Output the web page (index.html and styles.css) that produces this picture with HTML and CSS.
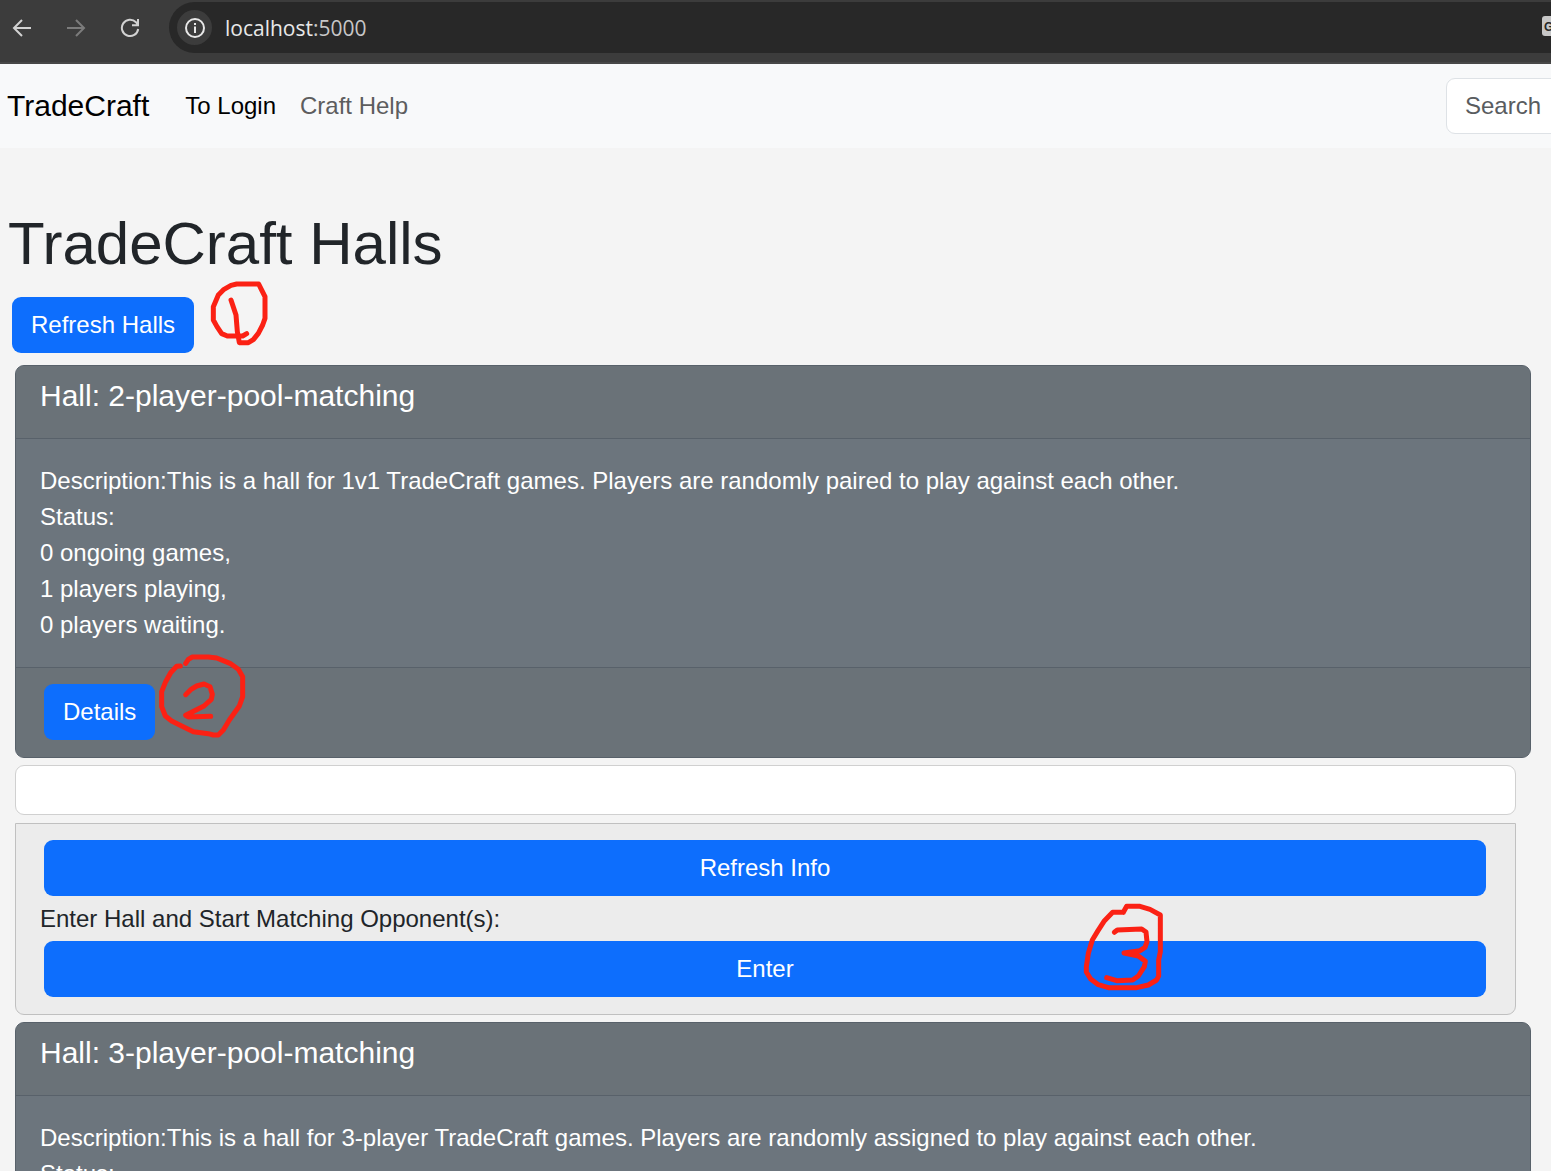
FILE: index.html
```html
<!DOCTYPE html>
<html lang="en">
<head>
<meta charset="utf-8">
<title>TradeCraft Halls</title>
<link rel="stylesheet" href="styles.css">
</head>
<body>
<div class="window">
  <header class="browser">
    <button class="tool" type="button" aria-label="Back"><svg width="20" height="20" viewBox="0 0 20 20"><path d="M19 10H2M10 2L2 10L10 18"/></svg></button>
    <button class="tool tool-off" type="button" aria-label="Forward"><svg width="20" height="20" viewBox="0 0 20 20"><path d="M1 10H18M10 2L18 10L10 18"/></svg></button>
    <button class="tool" type="button" aria-label="Reload"><svg width="20" height="20" viewBox="0 0 20 20"><path d="M18.2 11A8.2 8.2 0 1 1 16 4.2L17.6 6.5M18 1V7.3H12M18 3V7.3H14"/></svg></button>
    <div class="address">
      <button class="site-info" type="button" aria-label="Site information"><svg width="20" height="20" viewBox="0 0 20 20"><circle cx="10" cy="10" r="9"/><path d="M10 8.5V15M10 5V7"/></svg></button>
      <span class="url">localhost<span class="port">:5000</span></span>
      <span class="translate">G</span>
    </div>
  </header>

  <nav class="navbar">
    <a class="brand" href="#">TradeCraft</a>
    <a class="nav-link active" href="#">To Login</a>
    <a class="nav-link" href="#">Craft Help</a>
    <form class="search"><input type="search" placeholder="Search" aria-label="Search"></form>
  </nav>

  <main class="page">
    <h1>TradeCraft Halls</h1>
    <div class="actions">
      <button class="btn" type="button">Refresh Halls</button>
      <svg class="mark mark-one" width="60" height="66" viewBox="630 243 180 198"><path d="M740 401L728 408H682L665 401L651 380L640 360V320L655 285L672 268L693 256L710 252H776L784 268L795 290V355L788 375L775 400L760 419L745 428H718L712 395L708 345L693 300"/></svg>
    </div>

    <section class="card">
      <header class="card-header"><h4>Hall: 2-player-pool-matching</h4></header>
      <div class="card-body">
        <div>Description:This is a hall for 1v1 TradeCraft games. Players are randomly paired to play against each other.</div>
        <div>Status:</div>
        <div>0 ongoing games,</div>
        <div>1 players playing,</div>
        <div>0 players waiting.</div>
      </div>
      <footer class="card-footer">
        <button class="btn" type="button">Details</button>
        <svg class="mark mark-two" width="90" height="87" viewBox="474 36 270 261"><path d="M541 78L530 79L512 98L497 125L485 155V200L496 228L515 243L545 258L580 275L625 281L640 285H655L670 270L688 240L718 198L728 170V110L715 88L690 70L650 54L625 51H577L565 58L557 70M557 164L572 149L590 138L612 132L630 140L637 163L634 178L612 198L557 226L565 231L632 229"/></svg>
      </footer>
    </section>

    <input class="field" type="text" aria-label="Hall message">

    <section class="panel">
      <button class="btn" type="button">Refresh Info</button>
      <p>Enter Hall and Start Matching Opponent(s):</p>
      <button class="btn" type="button">Enter</button>
      <svg class="mark mark-three" width="86" height="94" viewBox="66 30 258 282"><path d="M190 67H158L132 94L114 122L97 150L85 190L79 230V246L92 267L115 284L145 293H230L265 285L290 270L296 258V210L301 185V75L270 58L240 49H200L190 67M163 127L172 120L245 117L258 126L261 155L255 172L240 182L192 189L235 198L256 214L253 230L235 258L218 270L170 272L140 263"/></svg>
    </section>

    <section class="card">
      <header class="card-header"><h4>Hall: 3-player-pool-matching</h4></header>
      <div class="card-body">
        <div>Description:This is a hall for 3-player TradeCraft games. Players are randomly assigned to play against each other.</div>
        <div>Status:</div>
      </div>
    </section>
  </main>
</div>
</body>
</html>
```
FILE: styles.css
```css
* { box-sizing: border-box; }

body {
  margin: 0;
  background: #f4f4f4;
  color: #212529;
  font: 24px/36px "Liberation Sans", Arial, sans-serif;
}

button, input { font: inherit; }
svg { display: block; fill: none; stroke: currentColor; }
h1, h4, p { margin: 0; font-weight: 400; }

.window { height: 100vh; overflow: hidden; }

/* Browser toolbar */
.browser {
  display: flex;
  align-items: center;
  height: 64px;
  padding: 0 0 7px 12px;
  background: #3c3c3c;
  border-bottom: 2px solid #474747;
}
.tool {
  width: 20px;
  margin-right: 34px;
  padding: 0;
  border: 0;
  background: none;
  color: #d2d2d2;
}
.tool svg { stroke-width: 2; }
.tool-off { color: #7c7c7c; }
.address {
  display: flex;
  flex: 1;
  align-items: center;
  min-width: 0;
  height: 51px;
  margin-left: -5px;
  padding-left: 8px;
  border-radius: 26px 0 0 26px;
  background: #282828;
}
.site-info {
  display: grid;
  place-items: center;
  width: 35px;
  height: 35px;
  padding: 0;
  border: 0;
  border-radius: 50%;
  background: #3c3c3c;
  color: #e8e8e8;
}
.site-info svg { stroke-width: 2; }
.url {
  flex: 1;
  margin-left: 13px;
  color: #e8e8e8;
  font: 21px/36px "Open Sans", "Noto Sans", sans-serif;
}
.port { color: #c7c7c7; }
.translate {
  flex: 0 0 9px;
  height: 20px;
  margin-bottom: 4px;
  padding-left: 2px;
  border-radius: 3px 0 0 3px;
  background: #c7c7c7;
  color: #282828;
  font: bold 12px/22px "Liberation Sans", Arial, sans-serif;
  overflow: hidden;
}

/* Site navigation */
.navbar {
  display: flex;
  align-items: center;
  gap: 24px;
  height: 84px;
  padding-left: 7px;
  background: #f8f9fa;
}
.brand { margin-right: 12px; color: #000; font-size: 30px; text-decoration: none; }
.nav-link { color: #5d5d5e; text-decoration: none; }
.nav-link.active { color: #000; }
.search { flex: 0 0 105px; min-width: 0; margin-left: auto; }
.search input {
  display: block;
  width: 304px;
  height: 56px;
  padding: 0 18px;
  border: 1px solid #dee2e6;
  border-radius: 9px;
  background: #fff;
}
.search input::placeholder { color: #595c5f; opacity: 1; }

/* Halls */
.page { padding-top: 60px; }
h1 { padding-left: 8px; font-size: 60px; line-height: 72px; }
.actions { position: relative; display: flex; padding: 17px 12px 12px; }
.btn {
  height: 56px;
  padding: 0 19px;
  border: 0;
  border-radius: 9px;
  background: #0d6efd;
  color: #fff;
}
.card {
  margin: 0 20px 7px 15px;
  border: 1px solid #58616a;
  border-radius: 9px;
  background: #6c757d;
  color: #fff;
}
.card-header { padding: 12px 24px 24px; border-bottom: 1px solid #58616a; background: #6a7278; border-radius: 8px 8px 0 0; }
h4 { font-size: 30px; line-height: 36px; }
.card-body { padding: 24px; }
.card-footer {
  position: relative;
  padding: 16px 28px 17px;
  border-top: 1px solid #58616a;
  border-radius: 0 0 8px 8px;
  background: #6a7278;
}
.card-footer .btn { display: block; }
.field {
  display: block;
  width: calc(100% - 50px);
  height: 50px;
  margin: 0 35px 8px 15px;
  padding: 0 18px;
  border: 1px solid #d0d0d0;
  border-radius: 9px;
  background: #fff;
}
.panel {
  position: relative;
  display: flex;
  flex-direction: column;
  gap: 4px;
  margin: 0 35px 7px 15px;
  padding: 16px 29px 17px 28px;
  border: 1px solid #c0c0c0;
  border-radius: 0 0 9px 9px;
  background: #ececec;
}
.panel p { margin-left: -4px; padding-top: 1px; }

/* Hand-drawn step numbers over the page */
.mark {
  position: absolute;
  color: #fb2114;
  stroke-width: 15;
  stroke-linecap: round;
  stroke-linejoin: round;
  pointer-events: none;
}
.mark-one { left: 210px; top: 1px; }
.mark-two { left: 142px; top: -16px; }
.mark-three { left: 1066px; top: 76px; }
```
